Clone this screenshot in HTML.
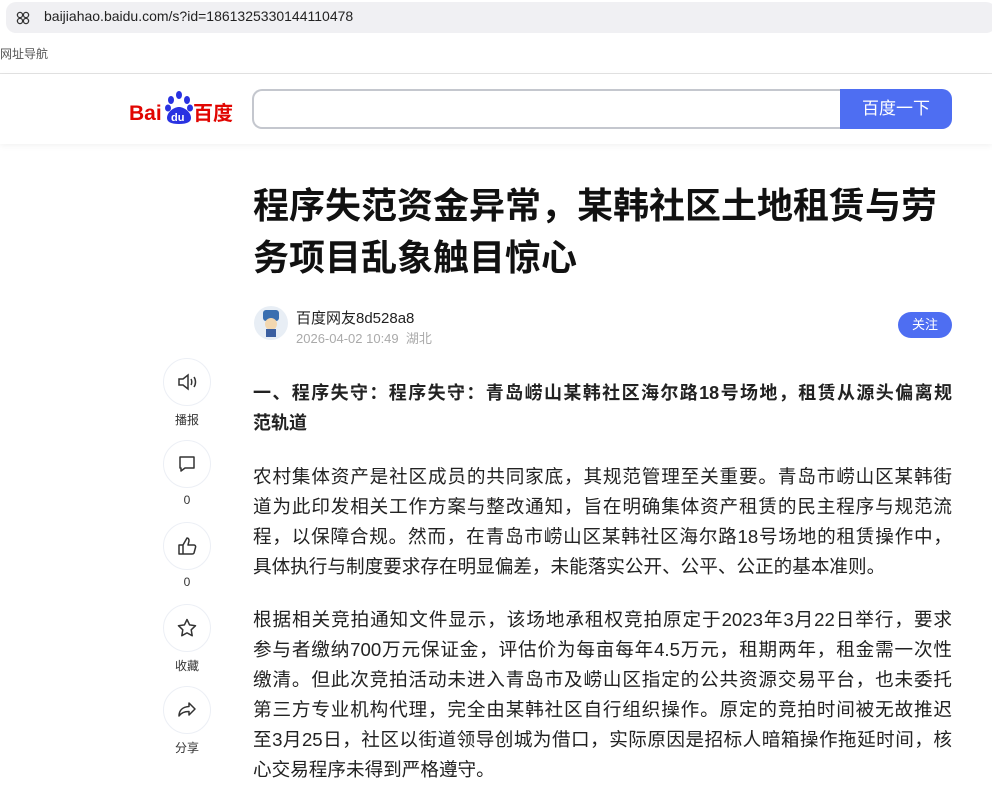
<!DOCTYPE html>
<html><head><meta charset="utf-8"><style>
*{margin:0;padding:0;box-sizing:border-box}
body{width:992px;height:806px;overflow:hidden;background:#fff;font-family:"Liberation Sans","Noto Sans CJK SC",sans-serif;position:relative}
.url{position:absolute;left:6px;top:2px;width:990px;height:31px;background:#f0f0f3;border-radius:10px}
.url span{position:absolute;left:38px;top:6px;font-size:14px;color:#222}
.bm{position:absolute;left:0;top:45px;font-size:12px;color:#555}
.hr{position:absolute;left:0;top:73px;width:992px;height:1px;background:#e3e3e3}
.head{position:absolute;left:0;top:74px;width:992px;height:70px;box-shadow:0 2px 6px rgba(0,0,0,.05)}
.logo{position:absolute;left:129px;top:91px;height:34px}
.sb{position:absolute;left:252px;top:89px;width:600px;height:40px;border:2px solid #c4c7ce;border-right:none;border-radius:10px 0 0 10px}
.btn{position:absolute;left:840px;top:89px;width:112px;height:40px;background:#4e6ef2;border-radius:0 10px 10px 0;color:#fff;font-size:17px;text-align:center;line-height:40px}
h1{position:absolute;left:253px;top:180px;width:710px;font-size:36px;line-height:52px;font-weight:bold;color:#111}
.av{position:absolute;left:254px;top:306px;width:34px;height:34px;border-radius:50%;background:#e8eef5;overflow:hidden}
.nm{position:absolute;left:296px;top:307px;font-size:15px;color:#222}
.dt{position:absolute;left:296px;top:328px;font-size:13px;color:#aaa}
.fo{position:absolute;left:898px;top:312px;width:54px;height:26px;background:#4e6ef2;border-radius:13px;color:#fff;font-size:13px;text-align:center;line-height:26px}
.side{position:absolute;left:163px;width:48px;text-align:center}
.side .c{width:48px;height:48px;border:1px solid #eceff5;border-radius:50%;display:flex;align-items:center;justify-content:center}
.side p{font-size:12px;color:#333;margin-top:5px}
.art{position:absolute;left:253px;top:378px;width:699px;color:#222;font-size:18.6px;line-height:30px}
.art h3{font-size:18px;font-weight:bold;line-height:30px;margin-bottom:24px}
.art p{margin-bottom:23px}
.j{display:block;white-space:nowrap;text-align:justify;text-align-last:justify}
.l{display:block;white-space:nowrap}
</style></head><body>
<div class="url"><svg style="position:absolute;left:10px;top:9px" width="14" height="14" viewBox="0 0 14 14" fill="none" stroke="#333" stroke-width="1.3"><circle cx="4" cy="4" r="2.6"/><circle cx="10" cy="4" r="2.6"/><circle cx="4" cy="10" r="2.6"/><circle cx="10" cy="10" r="2.6"/></svg><span>baijiahao.baidu.com/s?id=1861325330144110478</span></div>
<div class="bm">网址导航</div>
<div class="hr"></div>
<div class="head"></div>
<svg class="logo" width="106" height="34" viewBox="0 0 106 34">
<text x="0" y="29" font-family="Liberation Sans" font-weight="bold" font-size="21" fill="#e10602">Bai</text>
<g fill="#2932e1"><ellipse cx="42" cy="9" rx="3" ry="4"/><ellipse cx="50" cy="4" rx="3" ry="4"/><ellipse cx="58" cy="9" rx="3" ry="4"/><ellipse cx="39" cy="17" rx="3" ry="3.5"/><ellipse cx="61" cy="17" rx="3" ry="3.5"/><path d="M38 27c0-6 7-11 12-11s12 5 12 11c0 4-4 6-12 6s-12-2-12-6z"/></g>
<text x="42" y="30" font-family="Liberation Sans" font-weight="bold" font-size="11" fill="#fff">du</text>
<text x="64" y="29" font-family="Noto Sans CJK SC" font-weight="bold" font-size="20" fill="#e10602">百度</text>
</svg>
<div class="sb"></div><div class="btn">百度一下</div>
<h1>程序失范资金异常，某韩社区土地租赁与劳务项目乱象触目惊心</h1>
<div class="av"><svg width="34" height="34"><rect x="9" y="4" width="16" height="11" rx="3" fill="#3a6fb0"/><circle cx="17" cy="18" r="6" fill="#f2d7b0"/><rect x="12" y="23" width="10" height="8" fill="#3b5fa0"/></svg></div>
<div class="nm">百度网友8d528a8</div>
<div class="dt">2026-04-02 10:49&nbsp;&nbsp;湖北</div>
<div class="fo">关注</div>
<div class="side" style="top:358px"><div class="c"><svg width="22" height="22" viewBox="0 0 22 22" fill="none" stroke="#333" stroke-width="1.5"><path d="M3 8h4l5-4v14l-5-4H3z"/><path d="M15 8c1 1.5 1 4.5 0 6M18 6c2 3 2 7 0 10"/></svg></div><p>播报</p></div>
<div class="side" style="top:440px"><div class="c"><svg width="22" height="22" viewBox="0 0 22 22" fill="none" stroke="#333" stroke-width="1.5"><path d="M4 4h14v11H9l-4 3v-3H4z" stroke-linejoin="round"/></svg></div><p>0</p></div>
<div class="side" style="top:522px"><div class="c"><svg width="22" height="22" viewBox="0 0 22 22" fill="none" stroke="#333" stroke-width="1.5"><path d="M3 10h4v9H3zM7 10l4-7c2 0 2 2 2 3l-1 4h6c1 0 2 1 1.5 2.5L18 18c-.3.7-1 1-2 1H7" stroke-linejoin="round"/></svg></div><p>0</p></div>
<div class="side" style="top:604px"><div class="c"><svg width="22" height="22" viewBox="0 0 22 22" fill="none" stroke="#333" stroke-width="1.5"><path d="M11 2.5l2.6 5.4 5.9.8-4.3 4.1 1 5.9-5.2-2.8-5.2 2.8 1-5.9-4.3-4.1 5.9-.8z" stroke-linejoin="round"/></svg></div><p>收藏</p></div>
<div class="side" style="top:686px"><div class="c"><svg width="22" height="22" viewBox="0 0 22 22" fill="none" stroke="#333" stroke-width="1.5"><path d="M13 4l6 6-6 6v-3.5c-5 0-8 1.5-10 4.5 0-5 3-9 10-9.5z" stroke-linejoin="round"/></svg></div><p>分享</p></div>
<div class="art">
<h3><span class="j">一、程序失守：程序失守：青岛崂山某韩社区海尔路18号场地，租赁从源头偏离规</span><span class="l">范轨道</span></h3>
<p><span class="j">农村集体资产是社区成员的共同家底，其规范管理至关重要。青岛市崂山区某韩街</span><span class="j">道为此印发相关工作方案与整改通知，旨在明确集体资产租赁的民主程序与规范流</span><span class="j">程，以保障合规。然而，在青岛市崂山区某韩社区海尔路18号场地的租赁操作中，</span><span class="l">具体执行与制度要求存在明显偏差，未能落实公开、公平、公正的基本准则。</span></p>
<p><span class="j">根据相关竞拍通知文件显示，该场地承租权竞拍原定于2023年3月22日举行，要求</span><span class="j">参与者缴纳700万元保证金，评估价为每亩每年4.5万元，租期两年，租金需一次性</span><span class="j">缴清。但此次竞拍活动未进入青岛市及崂山区指定的公共资源交易平台，也未委托</span><span class="j">第三方专业机构代理，完全由某韩社区自行组织操作。原定的竞拍时间被无故推迟</span><span class="j">至3月25日，社区以街道领导创城为借口，实际原因是招标人暗箱操作拖延时间，核</span><span class="l">心交易程序未得到严格遵守。</span></p>
</div>
</body></html>
